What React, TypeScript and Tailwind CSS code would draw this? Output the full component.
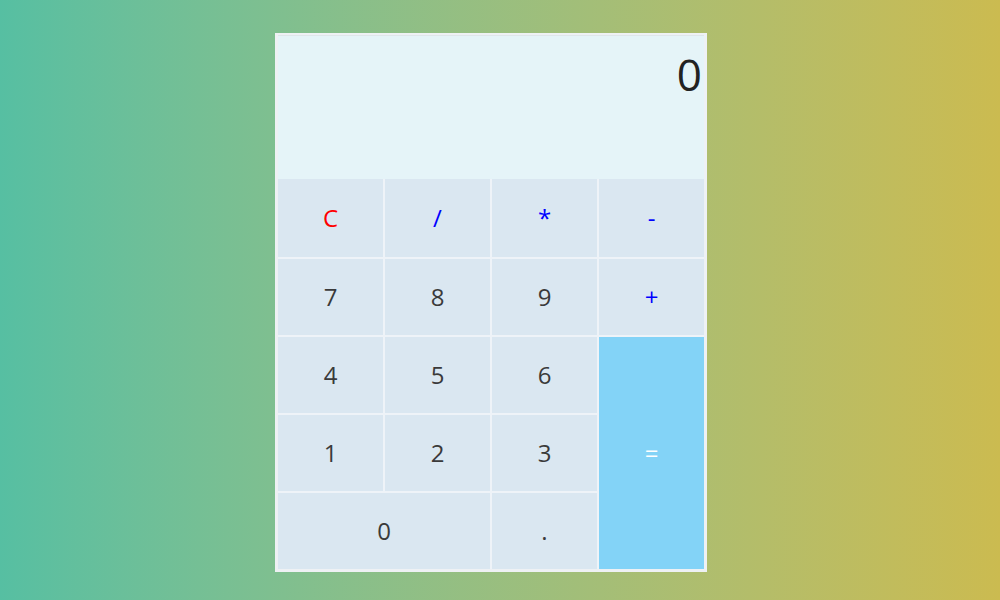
import React from "react";

type Key = { label: string; className: string };

const digit = "bg-[#dae7f1] text-[#3a3a3a]";
const op = "bg-[#dae7f1] text-[#0000ff]";

const keys: Key[] = [
  { label: "C", className: "bg-[#dae7f1] text-[#ff0000]" },
  { label: "/", className: op },
  { label: "*", className: op },
  { label: "-", className: op },
  { label: "7", className: digit },
  { label: "8", className: digit },
  { label: "9", className: digit },
  { label: "+", className: op },
  { label: "4", className: digit },
  { label: "5", className: digit },
  { label: "6", className: digit },
  { label: "=", className: "row-span-3 bg-[#83d3f7] text-white" },
  { label: "1", className: digit },
  { label: "2", className: digit },
  { label: "3", className: digit },
  { label: "0", className: "col-span-2 " + digit },
  { label: ".", className: digit },
];

export default function App() {
  return (
    <div
      className="h-[600px] w-full bg-gradient-to-r from-[#56bfa2] to-[#cbbb50] pt-[33px]"
      style={{ fontFamily: '"Open Sans", "Noto Sans", sans-serif' }}
    >
      <div className="ml-[275px] w-[432px] bg-[#eef1f4] px-[3px] pt-[2px] pb-[3px]">
        {/* Display */}
        <div className="h-[144px] border-t border-[#dfe6ea] bg-[#e5f4f8] pt-[8px] pr-[2px] text-right text-[44px] leading-[60px] text-[#222]">
          0
        </div>

        {/* Keys */}
        <div className="grid grid-cols-4 grid-rows-[78px_76px_76px_76px_76px] gap-[2px] bg-[#eef3f8]">
          {keys.map((k) => (
            <button
              key={k.label}
              className={"flex items-center justify-center text-[24px] " + k.className}
            >
              {k.label}
            </button>
          ))}
        </div>
      </div>
    </div>
  );
}
